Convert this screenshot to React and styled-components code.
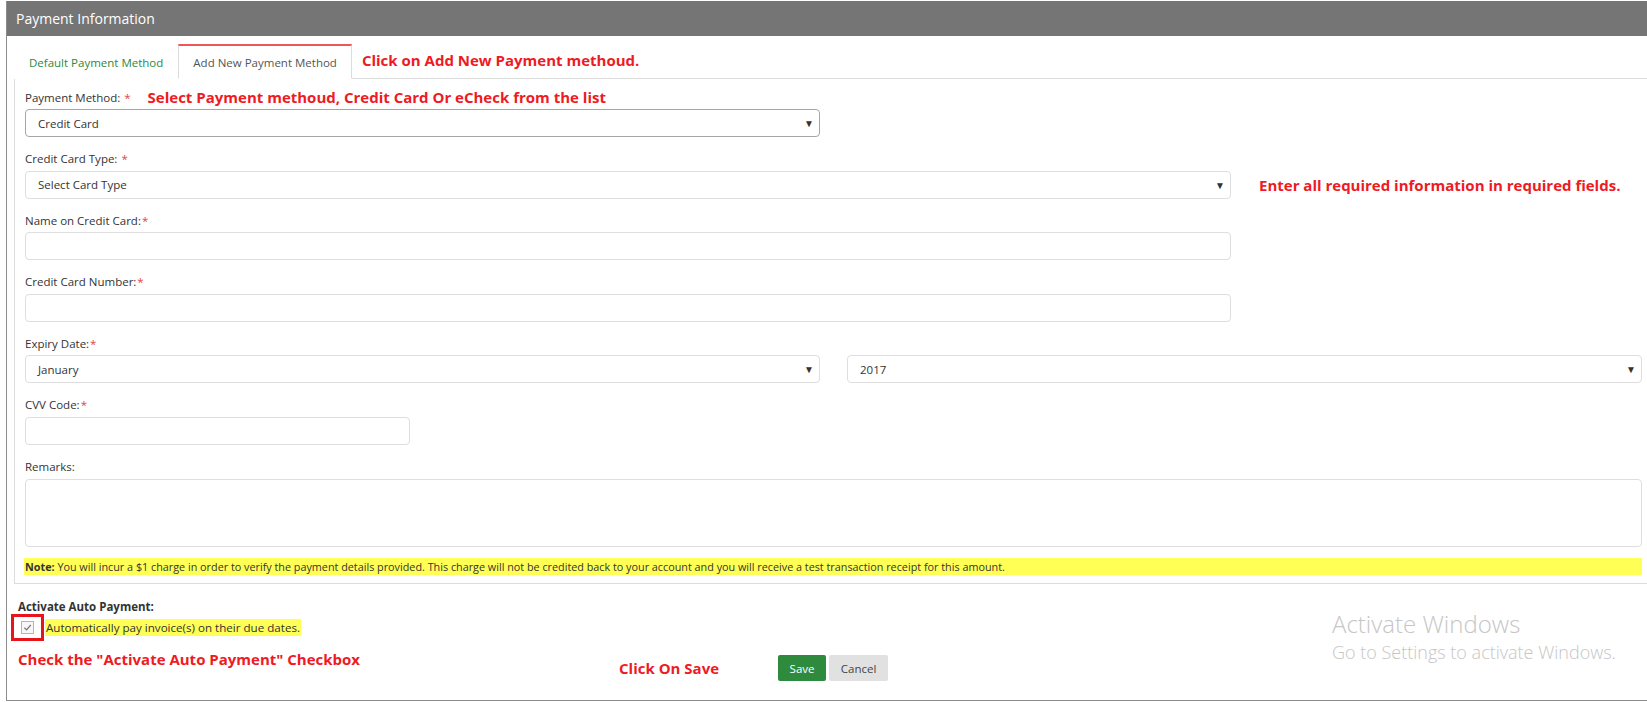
import React from 'react'
import styled, { createGlobalStyle } from 'styled-components'

const GlobalStyle = createGlobalStyle`
  html, body {
    margin: 0;
    padding: 0;
    background: #fff;
    overflow: hidden;
    font-family: "Open Sans", "Noto Sans", Arial, sans-serif;
    color: #333;
  }
`

const Panel = styled.div`
  position: relative;
  margin-left: 6px;
  margin-top: 1px;
  width: 1720px;
  height: 700px;
  box-sizing: border-box;
  border-left: 1px solid #8c8c8c;
  border-bottom: 1px solid #8c8c8c;
`

const Header = styled.div`
  height: 35px;
  line-height: 35px;
  background: #757575;
  color: #fff;
  font-size: 14px;
  padding-left: 9px;
`

const Body = styled.div`
  padding: 8px 0 0 7px;
`

const TabRow = styled.div`
  display: flex;
  align-items: stretch;
  height: 34px;
  border-bottom: 1px solid #dcdcdc;
`

const Tab = styled.div`
  display: flex;
  align-items: center;
  padding: 0 14px;
  font-size: 11.5px;
  color: ${p => (p.active ? '#555' : '#2c8a3c')};
  background: #fff;
  margin-bottom: -1px;
  border: 1px solid ${p => (p.active ? '#dcdcdc' : 'transparent')};
  border-top: 2px solid ${p => (p.active ? '#f0555a' : 'transparent')};
  border-bottom: 1px solid ${p => (p.active ? '#fff' : 'transparent')};
`

const Hint = styled.span`
  color: #ee1a24;
  font-weight: 700;
  font-size: 15px;
  white-space: nowrap;
`

const TabHint = styled(Hint)`
  align-self: center;
  margin-left: 10px;
  margin-bottom: 2px;
`

const Pane = styled.div`
  border: 1px solid #dcdcdc;
  border-top: none;
  padding: 10px 10px 8px 10px;
`

const Form = styled.div`
  width: 1617px;
`

const Group = styled.div`
  margin-bottom: 13.6px;
`

const LabelRow = styled.div`
  display: flex;
  align-items: center;
  height: 16px;
  margin-bottom: 4px;
`

const Label = styled.span`
  font-size: 11.5px;
  color: #333;
  white-space: nowrap;
`

const Star = styled.span`
  color: #e0454b;
  margin-left: ${p => (p.gap ? 4 : 1)}px;
`

const LabelHint = styled(Hint)`
  margin-left: 17px;
`

const Row = styled.div`
  display: flex;
  align-items: center;
  gap: ${p => p.gap || 0}px;
`

const SelectBox = styled.div`
  box-sizing: border-box;
  width: ${p => p.w}px;
  height: 28px;
  border: 1px solid ${p => (p.dark ? '#a6a6a6' : '#dedede')};
  border-radius: 4px;
  display: flex;
  align-items: center;
  justify-content: space-between;
  padding: 0 5px 0 12px;
  font-size: 11.5px;
  color: #333;
  background: #fff;
`

const Arrow = styled.span`
  font-size: 10px;
  color: #333;
`

const Input = styled.div`
  box-sizing: border-box;
  width: ${p => p.w}px;
  height: ${p => p.h || 28}px;
  border: 1px solid #dedede;
  border-radius: 4px;
  background: #fff;
`

const SideHint = styled(Hint)`
  margin-left: 28px;
`

const Note = styled.div`
  margin-top: -2px;
  background: #ffff55;
  font-size: 10.8px;
  height: 17px;
  line-height: 17px;
  color: #333;
  white-space: nowrap;
  width: 1618px;
  margin-left: -1px;
  padding-left: 1px;
  box-sizing: border-box;
  b {
    font-weight: 700;
  }
`

const AutoSection = styled.div`
  padding: 15px 0 0 4px;
`

const BoldLabel = styled.div`
  font-size: 11.5px;
  font-weight: 700;
  color: #333;
  height: 16px;
  line-height: 16px;
`

const CheckRow = styled.div`
  display: flex;
  align-items: center;
  margin-top: -2px;
  height: 28px;
`

const CheckFrame = styled.div`
  box-sizing: border-box;
  width: 33px;
  height: 27px;
  margin-left: -7px;
  border: 3px solid #e8141c;
  display: flex;
  align-items: center;
  justify-content: center;
`

const CheckBox = styled.div`
  box-sizing: border-box;
  width: 13px;
  height: 13px;
  border: 1px solid #b5b5b5;
  background: #f7f7f7;
  display: flex;
  align-items: center;
  justify-content: center;
`

const CheckText = styled.span`
  margin-left: 1px;
  background: #ffff55;
  font-size: 11.6px;
  padding: 1px 1px;
  color: #333;
`

const BottomRow = styled.div`
  display: flex;
  align-items: flex-start;
  margin-top: 8px;
`

const SaveHint = styled(Hint)`
  margin-left: 259px;
  margin-top: 9px;
`

const Buttons = styled.div`
  display: flex;
  gap: 3px;
  margin-left: 59px;
  margin-top: 6px;
`

const Button = styled.div`
  box-sizing: border-box;
  width: ${p => p.w}px;
  height: 26px;
  border-radius: 2px;
  display: flex;
  align-items: center;
  justify-content: center;
  font-size: 11.5px;
  background: ${p => (p.primary ? '#2e8b3e' : '#e1e1e1')};
  color: ${p => (p.primary ? '#fff' : '#444')};
`

const Watermark = styled.div`
  position: absolute;
  left: 1325px;
  top: 607px;
  color: #c6c6c6;
  font-family: "Open Sans", "Noto Sans", sans-serif;
  font-weight: 300;
`

const WmTitle = styled.div`
  font-size: 24px;
  line-height: 32px;
`

const WmSub = styled.div`
  font-size: 18px;
  line-height: 24px;
`

const Field = ({ label, star, gap, children, hint }) => (
  <Group>
    <LabelRow>
      <Label>
        {label}
        {star && <Star gap={gap}>*</Star>}
      </Label>
      {hint && <LabelHint>{hint}</LabelHint>}
    </LabelRow>
    {children}
  </Group>
)

const Select = ({ w, dark, children }) => (
  <SelectBox w={w} dark={dark}>
    <span>{children}</span>
    <Arrow>▼</Arrow>
  </SelectBox>
)

const App = () => {
  return (
    <>
      <GlobalStyle />
      <Panel>
        <Header>Payment Information</Header>
        <Body>
          <TabRow>
            <Tab>Default Payment Method</Tab>
            <Tab active>Add New Payment Method</Tab>
            <TabHint>Click on Add New Payment methoud.</TabHint>
          </TabRow>
          <Pane>
            <Form>
              <Field
                label="Payment Method:"
                star
                gap
                hint="Select Payment methoud, Credit Card Or eCheck from the list"
              >
                <Select w={795} dark>Credit Card</Select>
              </Field>
              <Field label="Credit Card Type:" star gap>
                <Row>
                  <Select w={1206}>Select Card Type</Select>
                  <SideHint>Enter all required information in required fields.</SideHint>
                </Row>
              </Field>
              <Field label="Name on Credit Card:" star>
                <Input w={1206} />
              </Field>
              <Field label="Credit Card Number:" star>
                <Input w={1206} />
              </Field>
              <Field label="Expiry Date:" star>
                <Row gap={27}>
                  <Select w={795}>January</Select>
                  <Select w={795}>2017</Select>
                </Row>
              </Field>
              <Field label="CVV Code:" star>
                <Input w={385} />
              </Field>
              <Field label="Remarks:">
                <Input w={1617} h={68} />
              </Field>
              <Note>
                <b>Note:</b> You will incur a $1 charge in order to verify the payment details provided. This charge will not be credited back to your account and you will receive a test transaction receipt for this amount.
              </Note>
            </Form>
          </Pane>
          <AutoSection>
            <BoldLabel>Activate Auto Payment:</BoldLabel>
            <CheckRow>
              <CheckFrame>
                <CheckBox>
                  <svg width="9" height="9" viewBox="0 0 10 10">
                    <path d="M1.5 5.2 L4 7.6 L8.6 2.2" fill="none" stroke="#7a7a7a" strokeWidth="1.4" />
                  </svg>
                </CheckBox>
              </CheckFrame>
              <CheckText>Automatically pay invoice(s) on their due dates.</CheckText>
            </CheckRow>
            <BottomRow>
              <Hint>Check the "Activate Auto Payment" Checkbox</Hint>
              <SaveHint>Click On Save</SaveHint>
              <Buttons>
                <Button primary w={48}>Save</Button>
                <Button w={59}>Cancel</Button>
              </Buttons>
            </BottomRow>
          </AutoSection>
        </Body>
        <Watermark>
          <WmTitle>Activate Windows</WmTitle>
          <WmSub>Go to Settings to activate Windows.</WmSub>
        </Watermark>
      </Panel>
    </>
  )
}

export default App
